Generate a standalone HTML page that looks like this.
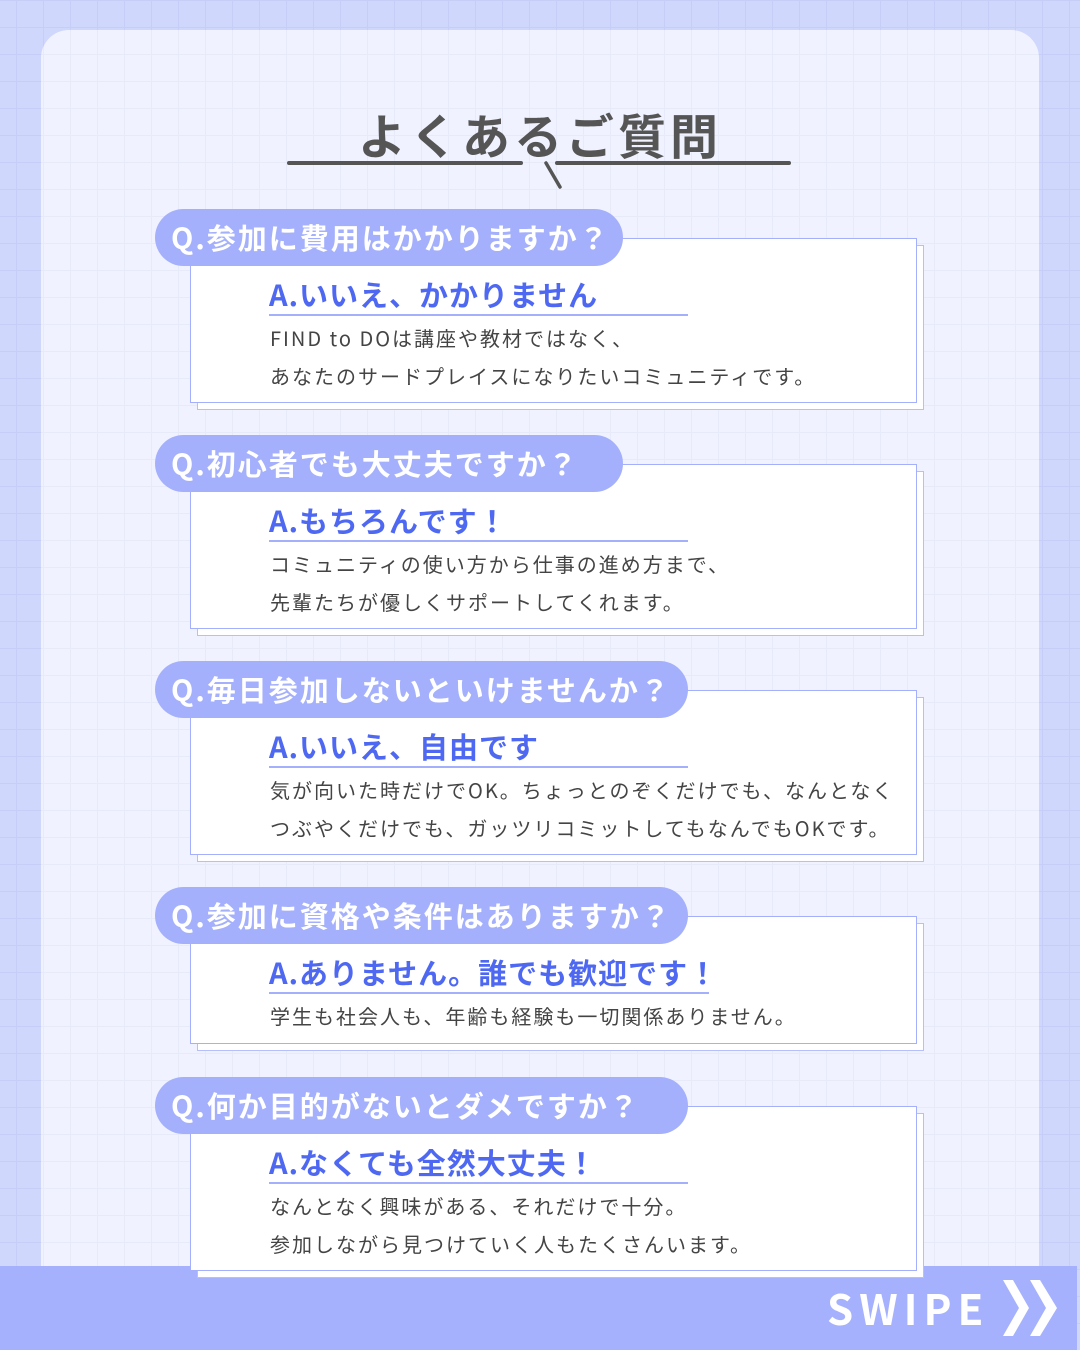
<!DOCTYPE html><html><head><meta charset="utf-8"><style>
*{margin:0;padding:0;box-sizing:border-box}
html,body{width:1080px;height:1350px;overflow:hidden}
body{position:relative;font-family:"Noto Sans CJK JP","Liberation Sans",sans-serif;
background-color:#d0d7fd;background-image:linear-gradient(#c6cef8 1px,transparent 1px),linear-gradient(90deg,#c6cef8 1px,transparent 1px);background-size:27px 27px;background-position:16px 0}
.panel{position:absolute;left:41px;top:30px;width:998px;height:1320px;border-radius:28px 28px 0 0;background-color:#f0f3ff;
background-image:linear-gradient(#e6eaf9 1px,transparent 1px),linear-gradient(90deg,#e6eaf9 1px,transparent 1px);background-size:27px 27px;background-position:-25px -3px}
.title{position:absolute;left:0;width:1080px;top:98px;text-align:center;font-size:48px;font-weight:bold;color:#555;letter-spacing:4px;line-height:70px}
.ln{position:absolute;height:4px;background:#555;border-radius:2px;top:161px}
.sh{position:absolute;left:197px;width:727px;border:1px solid #b5bffb;background:#fff}
.card{position:absolute;left:190px;width:727px;border:1px solid #a4b0fc;background:#fff}
.q{position:absolute;left:155px;height:57px;border-radius:29px;background:#a4b0fc;color:#fff;font-size:29px;font-weight:bold;line-height:57px;padding-left:16px;white-space:nowrap;letter-spacing:2px}
.a{position:absolute;left:269px;width:419px;border-bottom:2px solid #a4b0fc;color:#4e68f2;font-size:29px;font-weight:bold;line-height:40px;white-space:nowrap;letter-spacing:1px}
.b{position:absolute;left:270px;color:#444;font-size:20px;line-height:38px;white-space:nowrap;letter-spacing:2px}
.bar{position:absolute;left:0;top:1266px;width:1077px;height:84px;background:#a5b1fd}
.sw{position:absolute;left:827px;top:1280px;color:#fff;font-size:42px;font-weight:bold;letter-spacing:6px;line-height:56px}
</style></head><body>
<div class="panel"></div>
<div class="title">よくあるご質問</div>
<div class="ln" style="left:287px;width:236px"></div>
<div class="ln" style="left:555px;width:236px"></div>
<svg style="position:absolute;left:0;top:0" width="1080" height="200"><line x1="546" y1="163" x2="560" y2="187" stroke="#555" stroke-width="3.5" stroke-linecap="round"/></svg>

<div class="sh" style="top:245px;height:165px"></div><div class="card" style="top:238px;height:165px"></div>
<div class="q" style="top:209px;width:468px">Q.参加に費用はかかりますか？</div>
<div class="a" style="top:274px">A.いいえ、かかりません</div>
<div class="b" style="top:319px">FIND to DOは講座や教材ではなく、<br>あなたのサードプレイスになりたいコミュニティです。</div>

<div class="sh" style="top:471px;height:165px"></div><div class="card" style="top:464px;height:165px"></div>
<div class="q" style="top:435px;width:468px">Q.初心者でも大丈夫ですか？</div>
<div class="a" style="top:500px">A.もちろんです！</div>
<div class="b" style="top:545px">コミュニティの使い方から仕事の進め方まで、<br>先輩たちが優しくサポートしてくれます。</div>

<div class="sh" style="top:697px;height:165px"></div><div class="card" style="top:690px;height:165px"></div>
<div class="q" style="top:661px;width:533px">Q.毎日参加しないといけませんか？</div>
<div class="a" style="top:726px">A.いいえ、自由です</div>
<div class="b" style="top:771px">気が向いた時だけでOK。ちょっとのぞくだけでも、なんとなく<br>つぶやくだけでも、ガッツリコミットしてもなんでもOKです。</div>

<div class="sh" style="top:923px;height:128px"></div><div class="card" style="top:916px;height:128px"></div>
<div class="q" style="top:887px;width:533px">Q.参加に資格や条件はありますか？</div>
<div class="a" style="top:952px;width:440px">A.ありません。誰でも歓迎です！</div>
<div class="b" style="top:997px">学生も社会人も、年齢も経験も一切関係ありません。</div>

<div class="bar"></div>
<div class="sh" style="top:1113px;height:165px"></div><div class="card" style="top:1106px;height:165px"></div>
<div class="q" style="top:1077px;width:533px">Q.何か目的がないとダメですか？</div>
<div class="a" style="top:1142px">A.なくても全然大丈夫！</div>
<div class="b" style="top:1187px">なんとなく興味がある、それだけで十分。<br>参加しながら見つけていく人もたくさんいます。</div>

<div class="sw">SWIPE</div>
<svg style="position:absolute;left:1000px;top:1280px" width="60" height="60"><polygon points="3,0 13,0 29,28 13,56 3,56 19,28" fill="#fff"/><polygon points="30,0 40,0 57,28 40,56 30,56 46,28" fill="#fff"/></svg>
</body></html>
